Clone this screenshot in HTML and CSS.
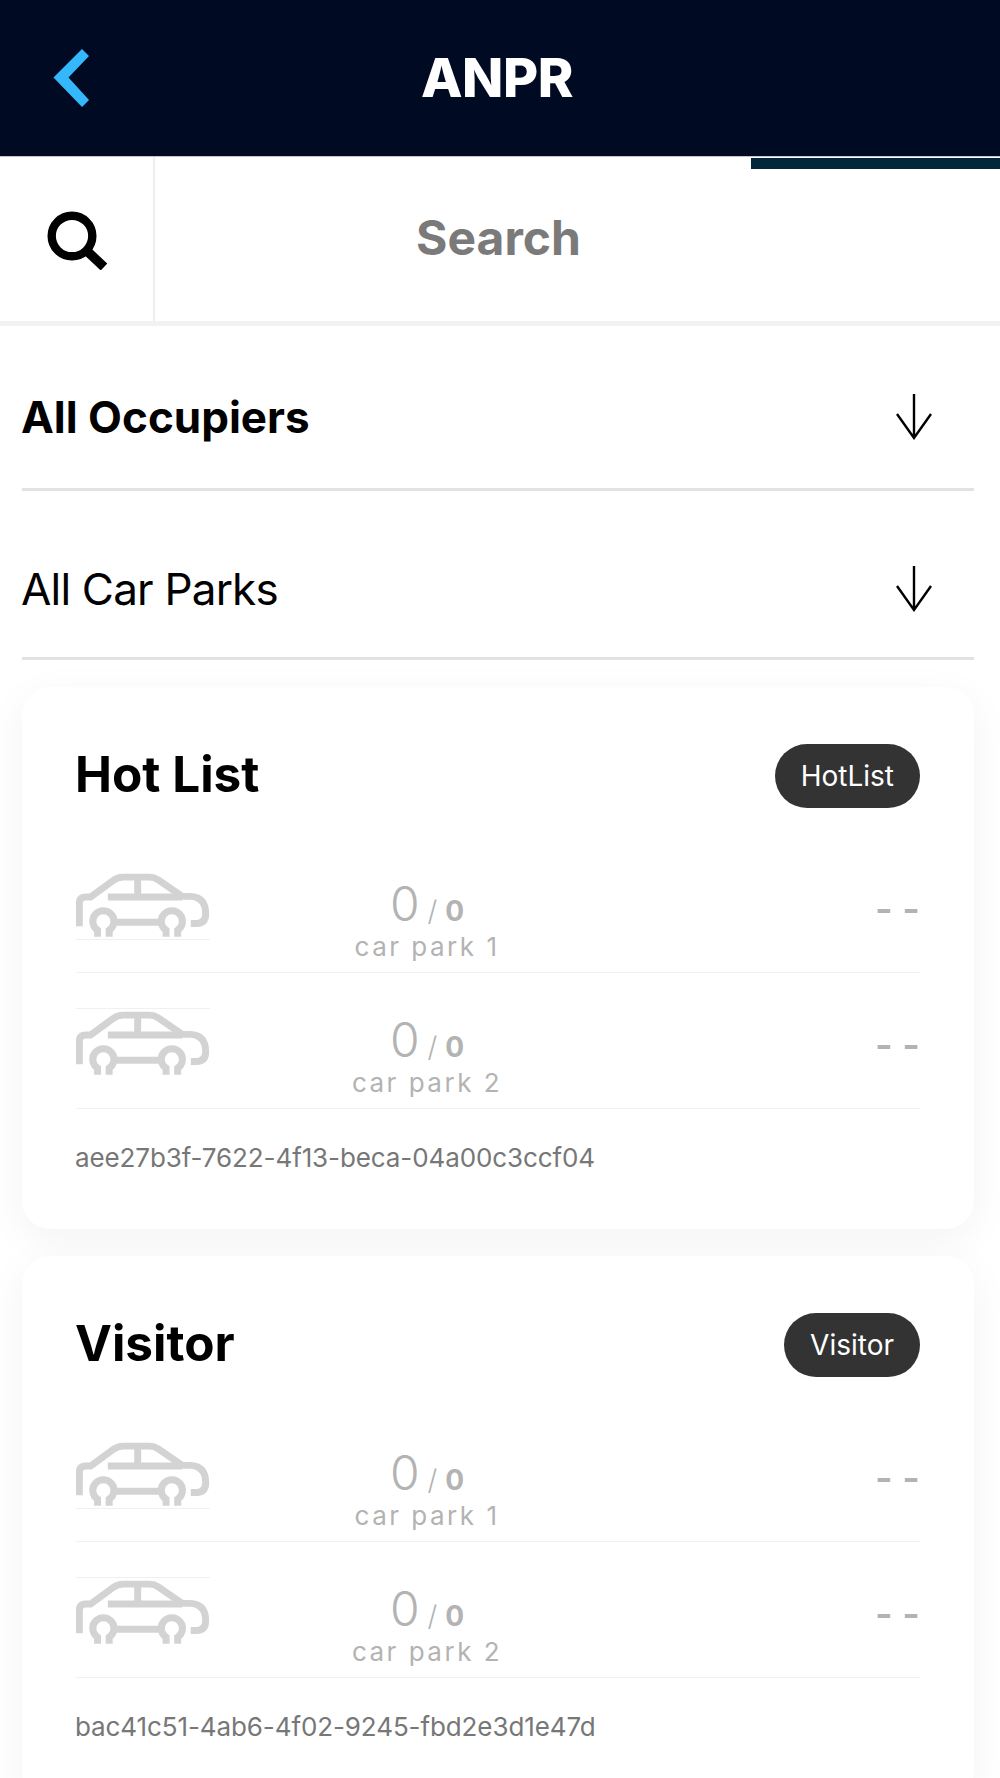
FILE: index.html
```html
<!DOCTYPE html>
<html>
<head>
<meta charset="UTF-8">
  <link rel="stylesheet" href="styles.css">
  <title>ANPR</title>
</head>
<body>
<svg class="defs" width="0" height="0">
  <symbol id="car" viewBox="76 100 404 192">
    <g fill="none" stroke="#d3d3d3" stroke-width="21">
      <path d="M86 260V192Q86 172 105 172H120L188 122Q202 112 218 112H298Q312 112 324 120L396 170H420Q467 172 467 222Q467 252 440 252H422"/>
      <path d="M262 112V172M172 172H396M196 248H326"/>
      <path d="M141 292V272A32 32 0 1 1 176 272V292"/>
      <path d="M347.5 292V272A32 32 0 1 1 382.5 272V292"/>
    </g>
  </symbol>
  <symbol id="arrow" viewBox="0 0 40 46">
    <path d="M19 0V44M2 20L19 44L36 20" fill="none" stroke="#000" stroke-width="2.4"/>
  </symbol>
</svg>

<header class="topbar">
  <svg class="back" width="36" height="58" viewBox="0 0 36 58"><polygon points="29,0 36,7 15.5,28.5 36,51 29,58 0.5,28.5" fill="#35b8fb"/></svg>
  <h1>ANPR</h1>
</header>

<div class="search">
  <div class="progress"></div>
  <div class="search-icon">
    <svg width="62" height="62" viewBox="0 0 62 62"><circle cx="26" cy="28" r="20.3" fill="none" stroke="#000" stroke-width="8.4"/><path d="M41 43L58 59" stroke="#000" stroke-width="9.5"/></svg>
  </div>
  <div class="search-text">Search</div>
</div>

<div class="select first">
  <span class="strong">All Occupiers</span>
  <svg class="arrow"><use href="#arrow"/></svg>
</div>
<div class="select second">
  <span>All Car Parks</span>
  <svg class="arrow"><use href="#arrow"/></svg>
</div>

<section class="card">
  <div class="card-head">
    <h2>Hot List</h2>
    <span class="badge">HotList</span>
  </div>
  <div class="row">
    <div class="car line-bottom"><svg><use href="#car"/></svg></div>
    <div class="count">
      <div class="nums"><span class="big">0</span> <span class="slash">/</span> <b>0</b></div>
      <div class="park">car park 1</div>
    </div>
    <div class="dash">- -</div>
  </div>
  <div class="row">
    <div class="car line-top"><svg><use href="#car"/></svg></div>
    <div class="count">
      <div class="nums"><span class="big">0</span> <span class="slash">/</span> <b>0</b></div>
      <div class="park">car park 2</div>
    </div>
    <div class="dash">- -</div>
  </div>
  <p class="uuid">aee27b3f-7622-4f13-beca-04a00c3ccf04</p>
</section>

<section class="card">
  <div class="card-head">
    <h2>Visitor</h2>
    <span class="badge">Visitor</span>
  </div>
  <div class="row">
    <div class="car line-bottom"><svg><use href="#car"/></svg></div>
    <div class="count">
      <div class="nums"><span class="big">0</span> <span class="slash">/</span> <b>0</b></div>
      <div class="park">car park 1</div>
    </div>
    <div class="dash">- -</div>
  </div>
  <div class="row">
    <div class="car line-top"><svg><use href="#car"/></svg></div>
    <div class="count">
      <div class="nums"><span class="big">0</span> <span class="slash">/</span> <b>0</b></div>
      <div class="park">car park 2</div>
    </div>
    <div class="dash">- -</div>
  </div>
  <p class="uuid">bac41c51-4ab6-4f02-9245-fbd2e3d1e47d</p>
</section>
</body>
</html>
```

FILE: styles.css
```css
html, body
{
  margin: 0;
  height: 1778px;
  overflow: hidden;
  background-color: #fff;
  font-family: "Inter", "Liberation Sans", sans-serif;
  color: #000;
}
.defs
{
  display: block;
}
.topbar
{
  height: 156px;
  background-color: #000a23;
  border-bottom: 1px solid #c4c5cc;
  padding-right: 6px;
  display: flex;
  align-items: center;
  justify-content: center;
  position: relative;
}
.topbar h1
{
  margin: 0 0 2px;
  color: #fff;
  font-size: 54px;
  font-weight: 800;
  letter-spacing: -0.5px;
}
.back
{
  position: absolute;
  left: 53px;
  top: 49px;
}
.search
{
  height: 164px;
  border-bottom: 5px solid #f2f2f2;
  display: flex;
  position: relative;
}
.progress
{
  position: absolute;
  top: 1px;
  right: 0;
  width: 249px;
  height: 11px;
  background-color: #02263a;
}
.search-icon
{
  width: 155px;
  border-right: 2px solid #eee;
  box-sizing: border-box;
  display: flex;
  align-items: center;
  justify-content: center;
}
.search-text
{
  flex: 1;
  padding-right: 158px;
  text-align: center;
  line-height: 162px;
  font-size: 48px;
  font-weight: 700;
  color: #7a7a7a;
}
.select
{
  margin: 0 26px 0 22px;
  border-bottom: 3px solid #e2e2e2;
  box-sizing: border-box;
  display: flex;
  align-items: center;
  justify-content: space-between;
  font-size: 44px;
  padding-right: 39px;
}
.select span
{
  margin-left: -1px;
}
.select.first
{
  height: 165px;
  padding-top: 20px;
}
.select.second
{
  height: 169px;
  padding-top: 30px;
  letter-spacing: -0.8px;
}
.strong
{
  font-weight: 700;
}
.arrow
{
  width: 40px;
  height: 46px;
}
.card
{
  margin: 27px 26px 0 22px;
  padding: 56px 54px 0;
  height: 542px;
  box-sizing: border-box;
  background-color: #fff;
  border-radius: 28px;
  box-shadow: 0 10px 40px rgba(0, 0, 0, 0.05);
}
.card-head
{
  display: flex;
  align-items: flex-start;
  justify-content: space-between;
  height: 64px;
  margin-bottom: 30px;
}
.card-head h2
{
  margin: 0 0 0 -1px;
  font-size: 49.5px;
  line-height: 62px;
  font-weight: 700;
}
.badge
{
  height: 64px;
  line-height: 64px;
  margin-top: 1px;
  padding: 0 26px;
  border-radius: 32px;
  background-color: #333;
  color: #fff;
  font-size: 28px;
}
.row
{
  height: 136px;
  box-sizing: border-box;
  border-bottom: 1px solid #f2f2f2;
  display: grid;
  grid-template-columns: 134px 434px 1fr;
  padding-top: 36px;
}
.car svg
{
  display: block;
  width: 134px;
  height: 64px;
}
.line-bottom
{
  height: 66px;
  border-bottom: 1px solid #f0f0f0;
}
.line-top
{
  height: 66px;
  border-top: 1px solid #f0f0f0;
  margin-top: -1px;
  padding-top: 2px;
}
.count
{
  text-align: center;
  color: #b3b3b3;
  padding-top: 6px;
}
.nums
{
  height: 50px;
  line-height: 50px;
  font-size: 28px;
  margin-bottom: 3px;
}
.big
{
  font-size: 48px;
  font-weight: 300;
}
.slash
{
  font-weight: 300;
}
.park
{
  font-size: 26px;
  line-height: 30px;
  letter-spacing: 2.5px;
}
.dash
{
  text-align: right;
  color: #b3b3b3;
  font-size: 38px;
  font-weight: 600;
  line-height: 50px;
  padding-top: 11px;
}
.uuid
{
  margin: 33px 0 0 -1px;
  font-size: 26px;
  line-height: 32px;
  letter-spacing: -0.1px;
  color: #777;
}
```
